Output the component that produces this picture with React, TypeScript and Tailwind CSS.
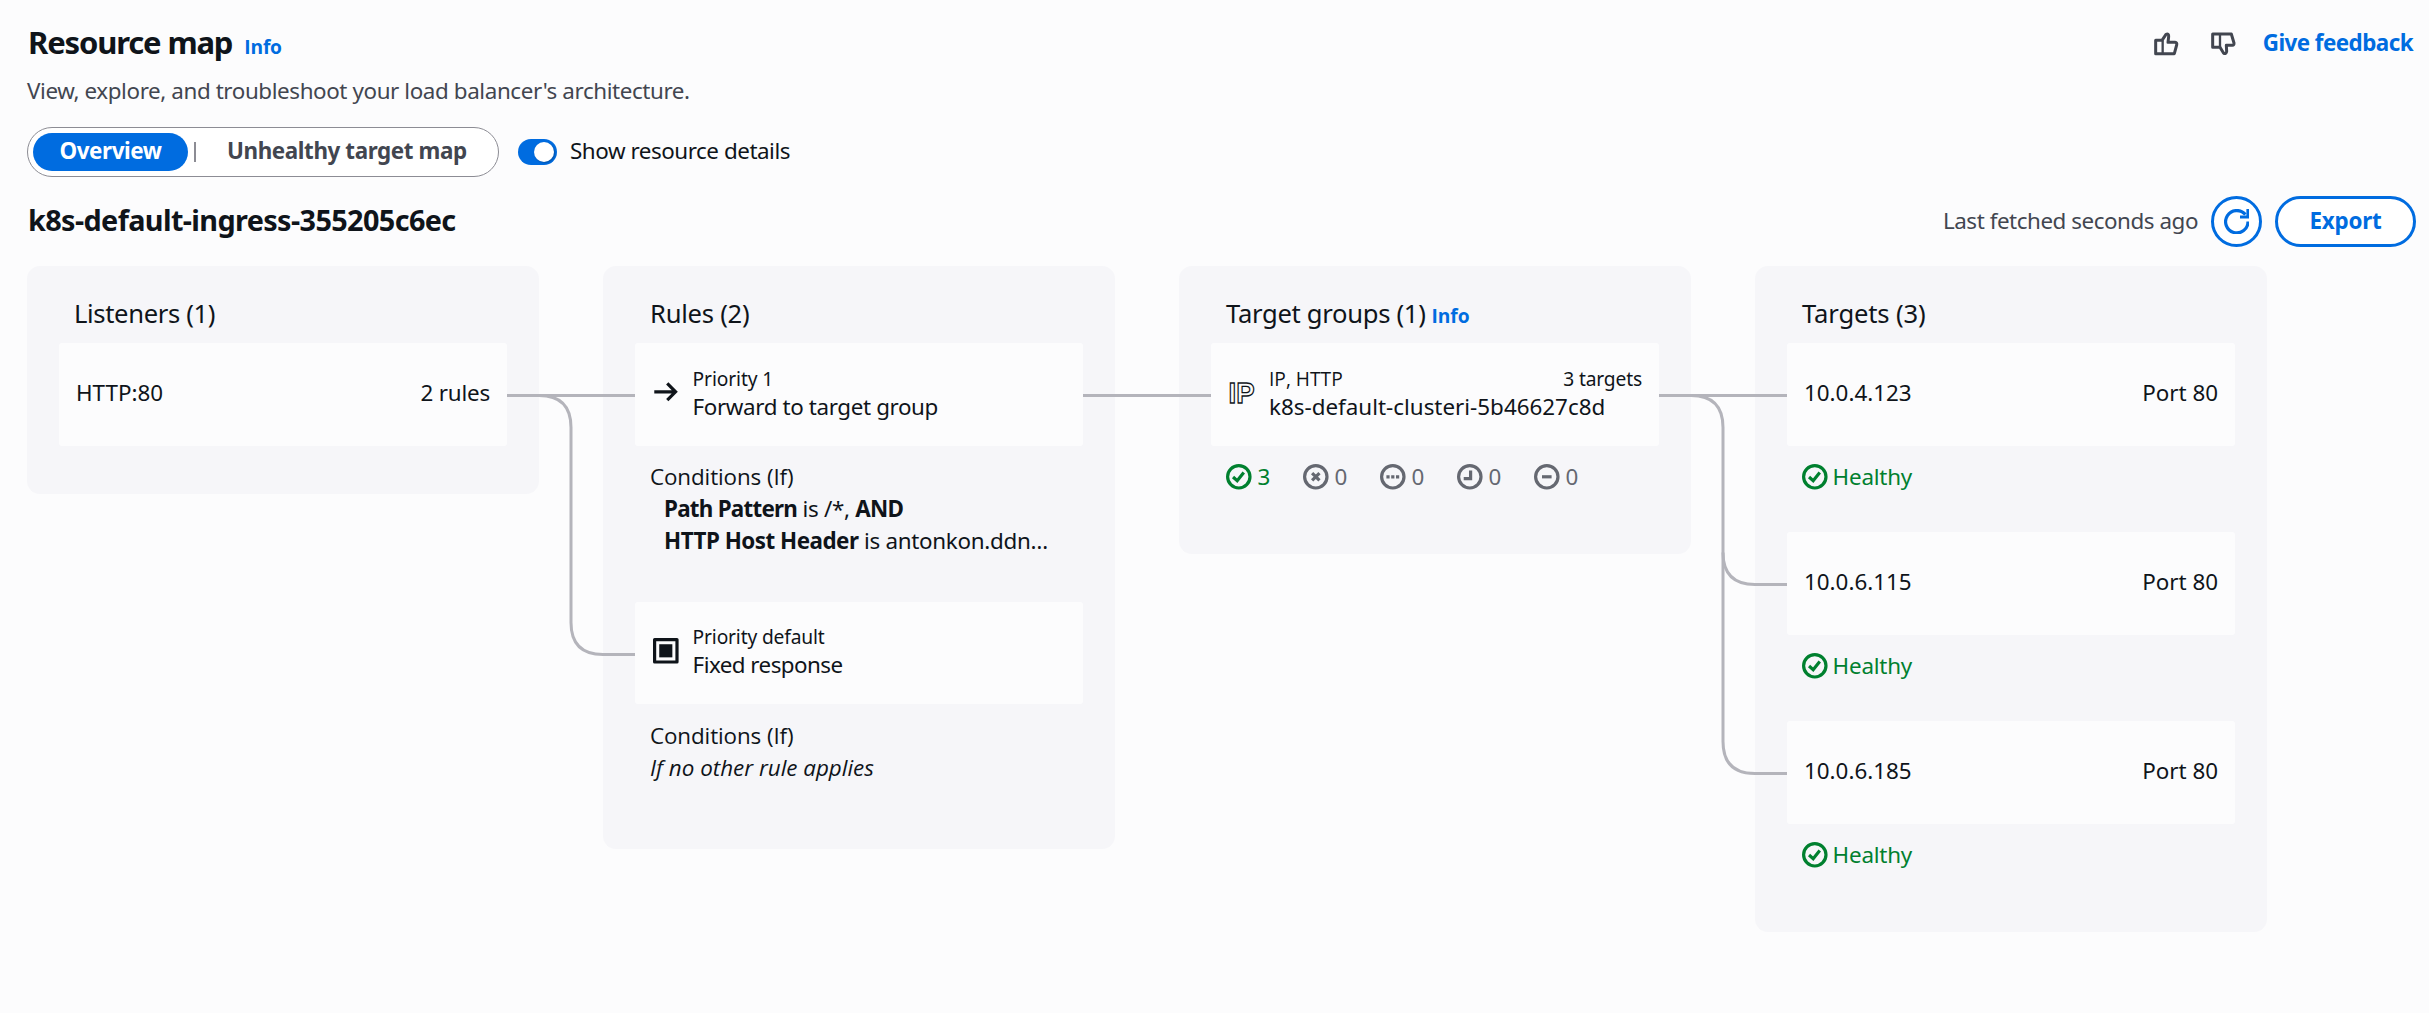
import type { ReactNode } from "react";

const SANS = "font-['Noto_Sans','Noto_Sans_CJK_SC',sans-serif]";
const OPEN = "font-['Open_Sans','Noto_Sans',sans-serif]";

function Icon({ children, className = "" }: { children: ReactNode; className?: string }) {
  return (
    <svg
      viewBox="0 0 16 16"
      className={`size-[25.6px] shrink-0 ${className}`}
      fill="none"
      stroke="currentColor"
      strokeWidth="2"
    >
      {children}
    </svg>
  );
}

type StatusKind = "healthy" | "unhealthy" | "unused" | "initial" | "draining";

function StatusIcon({ kind }: { kind: StatusKind }) {
  return (
    <Icon>
      <circle cx="8" cy="8" r="7" />
      {kind === "healthy" && <path d="M4.4 8.1 7 10.4 11.1 5.3" />}
      {kind === "unhealthy" && <path d="M5.7 5.7l4.6 4.6M10.3 5.7l-4.6 4.6" />}
      {kind === "unused" && <path d="M4 8h2M7 8h2M10 8h2" />}
      {kind === "initial" && <path d="M8.5 4v5.2H4.2" />}
      {kind === "draining" && <path d="M5 8h6" />}
    </Icon>
  );
}

function ThumbsUp() {
  return (
    <svg viewBox="41 33 80 77" className="h-[25.67px] w-[26.67px]" fill="none" stroke="currentColor" strokeWidth="9" strokeLinejoin="round">
      <path d="M49 61H68L80 43Q89 40 88 50L86 67H107Q114 68 112 75L105 101H49Z" />
      <path d="M70 61V101" strokeWidth="7" />
    </svg>
  );
}

function ThumbsDown() {
  return (
    <svg viewBox="211 33 80 77" className="h-[25.67px] w-[26.67px]" fill="none" stroke="currentColor" strokeWidth="9" strokeLinejoin="round">
      <path d="M219 42H275L283 69Q284 76 278 76H260L261 94Q260 103 252 100L241 82H219Z" />
      <path d="M241 42V82" strokeWidth="7" />
    </svg>
  );
}

function Column({ title, height, children }: { title: ReactNode; height: string; children: ReactNode }) {
  return (
    <section className={`w-[512px] rounded-[13px] bg-[#f6f6f9] px-8 pt-8 ${height}`}>
      <h3 className="mb-[13px] flex h-8 items-baseline pl-[15px] text-[25.6px] leading-8">{title}</h3>
      {children}
    </section>
  );
}

function Card({ children }: { children: ReactNode }) {
  return (
    <div className="flex h-[102.5px] items-center rounded-[3px] bg-[#fcfcfd] px-[17px] pb-[2px] whitespace-nowrap">
      {children}
    </div>
  );
}

function Details({ children, className = "" }: { children: ReactNode; className?: string }) {
  return <div className={`mt-[15.5px] -mb-px pl-[15px] leading-8 whitespace-nowrap ${className}`}>{children}</div>;
}

const counts: { kind: StatusKind; value: number; color: string }[] = [
  { kind: "healthy", value: 3, color: "text-[#00802f]" },
  { kind: "unhealthy", value: 0, color: "text-[#656871]" },
  { kind: "unused", value: 0, color: "text-[#656871]" },
  { kind: "initial", value: 0, color: "text-[#656871]" },
  { kind: "draining", value: 0, color: "text-[#656871]" },
];

const targets = ["10.0.4.123", "10.0.6.115", "10.0.6.185"];

export default function App() {
  return (
    <main className={`min-h-[1013px] bg-[#fcfcfd] pt-[22px] pl-[27px] text-[22.4px] text-[#0f141a] ${SANS}`}>
      <header className="flex h-[53px] items-start justify-between pr-4">
        <div className="flex items-baseline">
          <h1 className="ml-px text-[31px] leading-10 font-bold tracking-[-1.15px]">Resource map</h1>
          <a className={`ml-[12px] text-[19.2px] font-bold tracking-[-0.2px] text-[#006ce0] ${OPEN}`}>Info</a>
        </div>
        <div className="flex pt-[5px] text-[#424650]">
          <div className="flex gap-[30px] pt-[4px]">
            <ThumbsUp />
            <ThumbsDown />
          </div>
          <a className="ml-[26px] leading-8 font-bold tracking-[-0.55px] text-[#006ce0]">Give feedback</a>
        </div>
      </header>
      <p className="leading-8 tracking-[-0.4px] text-[#424650]">
        View, explore, and troubleshoot your load balancer's architecture.
      </p>

      <div className="mt-5 flex h-[50px] items-center">
        <div className="flex h-[50px] w-[472px] items-center rounded-full border-[1.6px] border-[#8c8c94] bg-white pl-[5px] font-bold whitespace-nowrap">
          <button className="flex h-[38px] w-[155px] items-center justify-center rounded-full bg-[#006ce0] pb-[2px] tracking-[-0.4px] text-white">
            Overview
          </button>
          <span className="ml-[6px] h-[20px] w-[2px] bg-[#8c8c94]" />
          <button className="ml-[31px] pb-[2px] tracking-[-0.4px] text-[#424650]">Unhealthy target map</button>
        </div>
        <div className="ml-[19px] flex h-[26px] w-[39px] items-center justify-end rounded-full bg-[#006ce0] pr-[3px]">
          <span className="size-[20px] rounded-full bg-white shadow-[1px_1px_2px_rgba(0,0,0,0.25)]" />
        </div>
        <span className="ml-[13px] pb-[2px] tracking-[-0.45px]">Show resource details</span>
      </div>

      <div className="mt-[19px] flex h-[51px] items-center justify-between pr-[13px]">
        <h2 className="pb-[3px] pl-px text-[28.8px] leading-9 font-bold tracking-[-0.62px]">
          k8s-default-ingress-355205c6ec
        </h2>
        <div className="flex items-center">
          <span className="pb-[1px] tracking-[-0.45px] text-[#424650]">Last fetched seconds ago</span>
          <button className="ml-[13px] flex size-[51px] items-center justify-center rounded-full border-[3px] border-[#006ce0] bg-white text-[#006ce0]">
            <Icon>
              <path d="M15 7.8a7 7 0 1 1-1.6-4.3" />
              <path d="M15 0v5h-5" />
            </Icon>
          </button>
          <button className="ml-[13px] flex h-[51px] w-[141px] items-center justify-center rounded-full border-[3px] border-[#006ce0] bg-white pb-[2px] font-bold tracking-[-0.2px] text-[#006ce0]">
            Export
          </button>
        </div>
      </div>

      <div className="relative mt-[19px] flex w-[2240px] items-start gap-16">
        <Column height="h-[228px]" title={<span className="tracking-[-0.35px]">Listeners (1)</span>}>
          <Card>
            <span>HTTP:80</span>
            <span className="ml-auto tracking-[-0.2px]">2 rules</span>
          </Card>
        </Column>

        <Column height="h-[583px]" title={<span className="tracking-[-0.25px]">Rules (2)</span>}>
          <Card>
            <Icon className="mb-[2px] ml-px">
              <path d="M.8 8h13.4M8.9 2.8 14.1 8l-5.2 5.2" />
            </Icon>
            <div className="ml-[14px] pb-px leading-7">
              <div className="text-[19.2px] tracking-[-0.1px]">Priority 1</div>
              <div className="tracking-[-0.38px]">Forward to target group</div>
            </div>
          </Card>
          <Details>
            <div className={`tracking-[-0.1px] ${OPEN}`}>Conditions (If)</div>
            <div className="pl-[14px]">
              <b className="tracking-[-0.75px]">Path Pattern</b>
              <span className="tracking-[-0.3px]"> is /*, </span>
              <b className="tracking-[-0.8px]">AND</b>
            </div>
            <div className="pl-[14px]">
              <b className="tracking-[-0.5px]">HTTP Host Header</b>
              <span className="tracking-[-0.3px]"> is antonkon.ddn</span>
              <span className="tracking-[1px]">…</span>
            </div>
          </Details>
          <div className="mt-[45.5px]">
            <Card>
              <Icon className="mb-[1px] ml-px">
                <rect x="1" y="1" width="14" height="14" strokeLinejoin="round" />
                <rect x="3.9" y="3.9" width="8.2" height="8.2" fill="currentColor" stroke="none" />
              </Icon>
              <div className="ml-[14px] pb-px leading-7">
                <div className="text-[19.2px] tracking-[-0.15px]">Priority default</div>
                <div className="tracking-[-0.55px]">Fixed response</div>
              </div>
            </Card>
          </div>
          <Details>
            <div className={`tracking-[-0.1px] ${OPEN}`}>Conditions (If)</div>
            <div className={`italic ${OPEN}`}>If no other rule applies</div>
          </Details>
        </Column>

        <Column
          height="h-[288px]"
          title={
            <>
              <span className="tracking-[-0.3px]">Target groups (1)</span>
              <a className={`ml-[6px] text-[19.2px] font-bold tracking-[-0.1px] text-[#006ce0] ${OPEN}`}>Info</a>
            </>
          }
        >
          <Card>
            <svg viewBox="0 0 28 26" className="h-[26px] w-[28px] shrink-0">
              <text
                x="0.5"
                y="23"
                textLength="26"
                lengthAdjust="spacingAndGlyphs"
                className="font-['Liberation_Sans',sans-serif] text-[30px] font-bold"
                fill="none"
                stroke="#0f141a"
                strokeWidth="1.3"
              >
                IP
              </text>
            </svg>
            <div className="ml-[13px] flex-1 pb-px leading-7">
              <div className="flex justify-between text-[19.2px]">
                <span className={OPEN}>IP, HTTP</span>
                <span className="tracking-[-0.15px]">3 targets</span>
              </div>
              <div>k8s-default-clusteri-5b46627c8d</div>
            </div>
          </Card>
          <Details className="flex">
            {counts.map(({ kind, value, color }) => (
              <div key={kind} className={`flex w-[77px] items-center ${color}`}>
                <StatusIcon kind={kind} />
                <span className="ml-[6px] h-8">{value}</span>
              </div>
            ))}
          </Details>
        </Column>

        <Column height="h-[666px]" title={<span className="tracking-[-0.15px]">Targets (3)</span>}>
          <div className="flex flex-col gap-10">
            {targets.map((ip) => (
              <div key={ip}>
                <Card>
                  <span>{ip}</span>
                  <span className="ml-auto">Port 80</span>
                </Card>
                <Details className="flex items-center text-[#00802f]">
                  <StatusIcon kind="healthy" />
                  <span className="ml-[5px] h-8 tracking-[-0.2px]">Healthy</span>
                </Details>
              </div>
            ))}
          </div>
        </Column>

        <svg
          viewBox="0 0 2240 666"
          className="pointer-events-none absolute top-0 left-0 h-[666px] w-[2240px]"
          fill="none"
          stroke="#b4b4bb"
          strokeWidth="3"
        >
          <path d="M480 129.5H608" />
          <path d="M480 129.5H512Q544 129.5 544 161.5V356.5Q544 388.5 576 388.5H608" />
          <path d="M1056 129.5H1184" />
          <path d="M1632 129.5H1760" />
          <path d="M1632 129.5H1664Q1696 129.5 1696 161.5V475.5Q1696 507.5 1728 507.5H1760" />
          <path d="M1696 286.5Q1696 318.5 1728 318.5H1760" />
        </svg>
      </div>
    </main>
  );
}
